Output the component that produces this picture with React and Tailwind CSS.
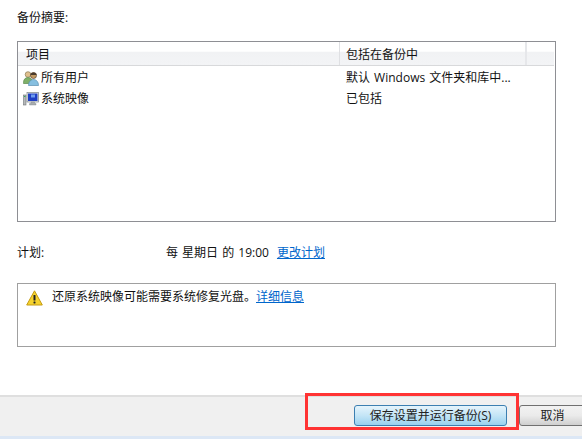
import React from 'react';

function UsersIcon() {
  return (
    <svg width="16" height="16" viewBox="0 0 16 16" className="shrink-0">
      <circle cx="5" cy="4.500" r="2.800" fill="#e0c08e" stroke="#8a7a55" strokeWidth="0.7" />
      <path d="M0.500 12.500c0-3.200 2-5 4.500-5s4.500 1.800 4.500 5v1h-9z" fill="#7fb069" stroke="#5d8a4c" strokeWidth="0.7" />
      <circle cx="10.500" cy="5.500" r="3" fill="#c49a62" stroke="#5b4630" strokeWidth="0.7" />
      <path d="M10.500 2.600c1.800 0 3 1.100 3 2.500H7.500c0-1.400 1.200-2.500 3-2.500z" fill="#4a3a2a" />
      <path d="M5.500 15.500c0-3.600 2.200-6 5-6s5 2.400 5 6z" fill="#86bfe0" stroke="#5a8fb0" strokeWidth="0.7" />
    </svg>
  );
}

function MonitorIcon() {
  return (
    <svg width="16" height="16" viewBox="0 0 16 16" className="shrink-0">
      <rect x="0.500" y="4" width="2.500" height="10" fill="#b5b8ba" stroke="#6f7477" strokeWidth="0.6" />
      <rect x="1" y="5" width="1.500" height="1" fill="#2fae5a" />
      <rect x="4" y="1.500" width="11.500" height="9.500" fill="#e6e8ea" stroke="#7d8488" strokeWidth="0.7" />
      <rect x="5" y="2.500" width="9.500" height="7.500" fill="#1f3fc4" />
      <rect x="8" y="3.500" width="4" height="3" fill="#6f9df0" />
      <path d="M8 11h3.500v1.500H13V14H6.500v-1.500H8z" fill="#a9adb0" stroke="#7d8488" strokeWidth="0.4" />
    </svg>
  );
}

function WarningIcon() {
  return (
    <svg width="17" height="16" viewBox="0 0 17 16" className="shrink-0">
      <path d="M8.500 0.800 16.300 15H0.700z" fill="#f6d32d" stroke="#c49a12" strokeWidth="1" strokeLinejoin="round" />
      <rect x="7.500" y="5" width="2" height="5.500" rx="0.600" fill="#222" />
      <rect x="7.500" y="11.500" width="2" height="2" rx="0.400" fill="#222" />
    </svg>
  );
}

export default function App() {
  return (
    <div className="w-[582px] h-[439px] relative overflow-hidden bg-white flex flex-col text-[12px] leading-[16px] text-[#111] font-['Open_Sans','Noto_Sans_CJK_SC',sans-serif]">
      <div className="flex-1 flex flex-col pl-[17px] pr-[26px]">
        {/* Summary */}
        <div className="mt-[10px] h-[16px]">备份摘要:</div>
        <div className="mt-[15px] h-[181px] border border-[#8e8f94]">
          <div className="flex h-[24px] mr-[1px] pl-[1px] border-b border-[#d8d9db] bg-gradient-to-b from-white from-40% via-[#f1f2f4] via-45% to-[#f3f4f6]">
            <div className="w-[321px] pl-[7px] pt-[5px] border-r border-[#dfe0e3]">项目</div>
            <div className="w-[187px] pl-[6px] pt-[5px] border-r-2 border-[#e6e7ea]">包括在备份中</div>
            <div className="flex-1" />
          </div>
          <div className="mt-[1px] flex h-[21px] items-center">
            <div className="w-[322px] pl-[5px] flex items-center gap-[2px]">
              <UsersIcon />
              <span>所有用户</span>
            </div>
            <div className="pl-[6px] [word-spacing:1px]">默认 Windows 文件夹和库中...</div>
          </div>
          <div className="flex h-[21px] items-center">
            <div className="w-[322px] pl-[5px] flex items-center gap-[2px]">
              <MonitorIcon />
              <span>系统映像</span>
            </div>
            <div className="pl-[6px]">已包括</div>
          </div>
        </div>

        {/* Schedule */}
        <div className="mt-[23px] flex h-[16px]">
          <div className="w-[149px]">计划:</div>
          <div className="[word-spacing:1px]">每 星期日 的 19:00</div>
          <a className="ml-[8px] text-[#0066cc] underline">更改计划</a>
        </div>

        {/* Warning */}
        <div className="mt-[22px] h-[64px] border border-[#a0a0a0] flex pl-[8px] pt-[5px]">
          <div className="pt-[1px]"><WarningIcon /></div>
          <div className="ml-[9px]">
            还原系统映像可能需要系统修复光盘。<a className="text-[#0066cc] underline">详细信息</a>
          </div>
        </div>
      </div>

      {/* Footer */}
      <div className="h-[41px] bg-[#f0f0f0] border-t-2 border-[#dfdfdf] flex justify-end items-start pt-[8px] -mr-[4px]">
        <button className="w-[153px] h-[21px] rounded-[3px] border border-[#3c7fb1] bg-gradient-to-b from-[#e5f4fc] via-[#c4e5f6] to-[#98d1ef] text-[#222] leading-[18px]">
          保存设置并运行备份(S)
        </button>
        <button className="ml-[12px] w-[67px] h-[21px] rounded-[3px] border border-[#707070] bg-gradient-to-b from-[#f2f2f2] via-[#ebebeb] to-[#cfcfcf] text-[#222] leading-[18px]">
          取消
        </button>
      </div>
      <div className="h-[3px] bg-[#dce7f5]" />

      {/* Red highlight drawn over the screenshot */}
      <div className="absolute left-[305px] top-[393px] w-[214px] h-[37px] border-[3px] border-[#ff3333]" />
    </div>
  );
}
